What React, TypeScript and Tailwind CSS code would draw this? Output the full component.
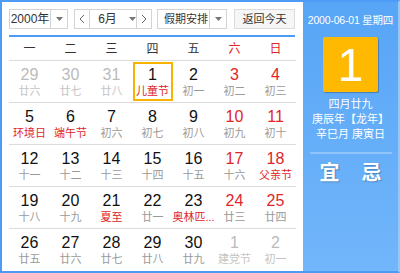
type Day = { n: number; l: string; numRed?: boolean; lRed?: boolean; dim?: boolean; sel?: boolean };

const rows: Day[][] = [
  [
    { n: 29, l: "廿六", dim: true },
    { n: 30, l: "廿七", dim: true },
    { n: 31, l: "廿八", dim: true },
    { n: 1, l: "儿童节", lRed: true, sel: true },
    { n: 2, l: "初一" },
    { n: 3, l: "初二", numRed: true },
    { n: 4, l: "初三", numRed: true },
  ],
  [
    { n: 5, l: "环境日", lRed: true },
    { n: 6, l: "端午节", lRed: true },
    { n: 7, l: "初六" },
    { n: 8, l: "初七" },
    { n: 9, l: "初八" },
    { n: 10, l: "初九", numRed: true },
    { n: 11, l: "初十", numRed: true },
  ],
  [
    { n: 12, l: "十一" },
    { n: 13, l: "十二" },
    { n: 14, l: "十三" },
    { n: 15, l: "十四" },
    { n: 16, l: "十五" },
    { n: 17, l: "十六", numRed: true },
    { n: 18, l: "父亲节", numRed: true, lRed: true },
  ],
  [
    { n: 19, l: "十八" },
    { n: 20, l: "十九" },
    { n: 21, l: "夏至", lRed: true },
    { n: 22, l: "廿一" },
    { n: 23, l: "奥林匹...", lRed: true },
    { n: 24, l: "廿三", numRed: true },
    { n: 25, l: "廿四", numRed: true },
  ],
  [
    { n: 26, l: "廿五" },
    { n: 27, l: "廿六" },
    { n: 28, l: "廿七" },
    { n: 29, l: "廿八" },
    { n: 30, l: "廿九" },
    { n: 1, l: "建党节", dim: true },
    { n: 2, l: "初一", dim: true },
  ],
];

const weekdays = ["一", "二", "三", "四", "五", "六", "日"];

function Caret() {
  return (
    <svg width="7" height="4" viewBox="0 0 7 4">
      <path d="M0 0h7L3.5 4z" fill="#777" />
    </svg>
  );
}

function Chevron({ dir }: { dir: "l" | "r" }) {
  return (
    <svg width="6" height="10" viewBox="0 0 6 10">
      <path d={dir === "l" ? "M5 1L1 5l4 4" : "M1 1l4 4-4 4"} stroke="#666" strokeWidth="1" fill="none" />
    </svg>
  );
}

function Cell({ d }: { d: Day }) {
  const numColor = d.dim ? "text-[#bbbbbb]" : d.numRed ? "text-[#e0262b]" : "text-[#111]";
  const lColor = d.dim ? "text-[#c4c4c4]" : d.lRed ? "text-[#e0262b]" : "text-[#9a9a9a]";
  return (
    <div className="h-[41px] flex items-center justify-center">
      <div
        className={`w-[40px] h-[39px] flex flex-col items-center justify-center ${
          d.sel ? "border-2 border-[#f7b300]" : ""
        }`}
      >
        <div className={`text-[16px] leading-[18px] ${numColor}`}>{d.n}</div>
        <div className={`text-[11px] leading-[14px] whitespace-nowrap ${lColor}`}>{d.l}</div>
      </div>
    </div>
  );
}

export default function App() {
  return (
    <div
      className="w-[400px] h-[273px] flex border-y-2 border-l-2 border-r-2 border-[#4d9bf5] border-r-[#93c8fb] bg-white"
      style={{ fontFamily: '"Liberation Sans", "Noto Sans CJK SC", sans-serif' }}
    >
      <div className="w-[301px] pl-[7px] pt-[7px]">
        <div className="flex items-center h-[20px] text-[11px] text-[#333] whitespace-nowrap">
          <div className="flex h-[20px] w-[59px] border border-[#d4d4d4]">
            <div className="flex-1 flex items-center justify-center text-[12px]">2000年</div>
            <div className="w-[17px] border-l border-[#d4d4d4] flex items-center justify-center">
              <Caret />
            </div>
          </div>
          <div className="flex h-[20px] w-[78px] ml-[6px] border border-[#d4d4d4]">
            <div className="w-[16px] border-r border-[#d4d4d4] flex items-center justify-center">
              <Chevron dir="l" />
            </div>
            <div className="flex-1 flex items-center pl-[8px] gap-[12px] text-[12px]">
              <span>6月</span>
              <Caret />
            </div>
            <div className="w-[16px] border-l border-[#d4d4d4] flex items-center justify-center">
              <Chevron dir="r" />
            </div>
          </div>
          <div className="flex h-[20px] w-[70px] ml-[5px] border border-[#d4d4d4]">
            <div className="flex-1 flex items-center pl-[6px]">假期安排</div>
            <div className="w-[17px] border-l border-[#d4d4d4] flex items-center justify-center">
              <Caret />
            </div>
          </div>
          <div className="h-[20px] w-[61px] ml-[7px] border border-[#dcdcdc] bg-[#f6f6f6] flex items-center justify-center">
            返回今天
          </div>
        </div>
        <div className="w-[286px] h-[2px] bg-[#4d9bf5] mt-[6px]" />
        <div className="w-[287px] grid grid-cols-7 h-[23px] items-center text-[12px] pt-[1px]">
          {weekdays.map((w, i) => (
            <div key={w} className={`text-center ${i >= 5 ? "text-[#e0262b]" : "text-[#333]"}`}>
              {w}
            </div>
          ))}
        </div>
        <div className="w-[287px] border-t border-[#dcdcdc]">
          {rows.map((r, i) => (
            <div key={i} className={`grid grid-cols-7 ${i < 4 ? "border-b border-[#dcdcdc]" : ""}`}>
              {r.map((d, j) => (
                <Cell key={j} d={d} />
              ))}
            </div>
          ))}
        </div>
      </div>
      <div className="flex-1 bg-gradient-to-b from-[#57a5f6] to-[#72b6fb] flex flex-col items-center text-white">
        <div className="mt-[11px] text-[10.5px] leading-[14px] tracking-[-0.2px] whitespace-nowrap">
          2000-06-01 星期四
        </div>
        <div className="mt-[10px] w-[55px] h-[55px] bg-[#ffb900] rounded-[2px] shadow-[1px_1px_1px_rgba(0,0,0,0.25)] flex items-center justify-center text-[46px] leading-none">
          1
        </div>
        <div className="mt-[5px] text-[11px] leading-[15px] text-center whitespace-nowrap">
          <div>四月廿九</div>
          <div>庚辰年【龙年】</div>
          <div>辛巳月 庚寅日</div>
        </div>
        <div className="mt-[10px] w-[82px] h-[2px] bg-[#8fc5fb]" />
        <div className="mt-[7px] flex gap-[22px] text-[20px] font-bold leading-[24px] [text-shadow:1px_1px_1px_rgba(0,0,0,0.25)]">
          <span>宜</span>
          <span>忌</span>
        </div>
      </div>
    </div>
  );
}
